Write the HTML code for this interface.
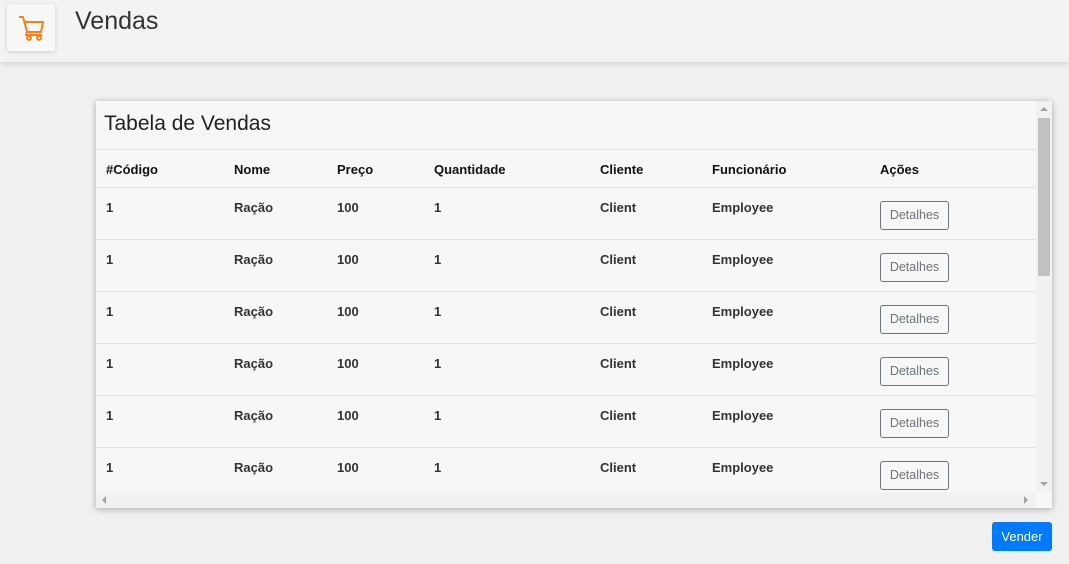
<!DOCTYPE html>
<html><head><meta charset="utf-8"><style>
*{box-sizing:border-box;margin:0;padding:0}
body{width:1069px;height:564px;background:#f0f0f0;font-family:"Liberation Sans",Arial,sans-serif;position:relative;overflow:hidden;color:#212529}
.hdr{position:absolute;left:0;top:0;width:1069px;height:62px;background:#f3f3f3;box-shadow:0 2px 5px rgba(0,0,0,.12)}
.ic{position:absolute;left:7px;top:4px;width:48px;height:47px;background:#f8f8f8;box-shadow:0 1px 4px rgba(0,0,0,.15)}
.ttl{position:absolute;left:75px;top:7px;font-size:25px;color:#333}
.card{position:absolute;left:96px;top:101px;width:956px;height:407px;background:#f7f7f7;box-shadow:0 1px 6px rgba(0,0,0,.3);overflow:hidden}
.ct{position:absolute;left:8px;top:11px;font-size:21px;color:#222}
.ln{position:absolute;left:0;width:940px;height:1px;background:#dee2e6}
.t{position:absolute;font-size:13px;font-weight:bold;color:#333}
.th{color:#111}
.btn{position:absolute;left:784px;width:69px;height:29px;border:1px solid #6c757d;border-radius:3px;font-size:12.5px;color:#6c757d;text-align:center;line-height:27px}
.vs{position:absolute;left:940px;top:0;width:16px;height:391px;background:#f1f1f1}
.vt{position:absolute;left:942px;top:17px;width:12px;height:158px;background:#c1c1c1}
.hs{position:absolute;left:0;top:391px;width:940px;height:16px;background:#f1f1f1}
.vb{position:absolute;left:992px;top:522px;width:60px;height:29px;background:#007bff;border-radius:3px;color:#fff;font-size:13px;text-align:center;line-height:29px}
</style></head><body>
<div class="hdr">
<div class="ic"><svg width="48" height="47" viewBox="0 0 48 47"><g fill="none" stroke="#fd7e14" stroke-width="2" stroke-linejoin="round"><path d="M12 13h4l4 15h14l2-10H17"/><path d="M20 28l-1 3h16"/></g><circle cx="22" cy="34" r="2" fill="none" stroke="#fd7e14" stroke-width="1.8"/><circle cx="32" cy="34" r="2" fill="none" stroke="#fd7e14" stroke-width="1.8"/></svg></div>
<div class="ttl">Vendas</div>
</div>
<div class="card">
<div class="ct">Tabela de Vendas</div>
<div class="ln" style="top:48px"></div>
<div class="t th" style="left:10px;top:61px">#Código</div>
<div class="t th" style="left:138px;top:61px">Nome</div>
<div class="t th" style="left:241px;top:61px">Preço</div>
<div class="t th" style="left:338px;top:61px">Quantidade</div>
<div class="t th" style="left:504px;top:61px">Cliente</div>
<div class="t th" style="left:616px;top:61px">Funcionário</div>
<div class="t th" style="left:784px;top:61px">Ações</div>
<div class="ln" style="top:86px"></div>
<div class="ln" style="top:138px"></div>
<div class="ln" style="top:190px"></div>
<div class="ln" style="top:242px"></div>
<div class="ln" style="top:294px"></div>
<div class="ln" style="top:346px"></div>
<div class="t" style="left:10px;top:99px">1</div><div class="t" style="left:138px;top:99px">Ração</div><div class="t" style="left:241px;top:99px">100</div><div class="t" style="left:338px;top:99px">1</div><div class="t" style="left:504px;top:99px">Client</div><div class="t" style="left:616px;top:99px">Employee</div><div class="btn" style="top:100px">Detalhes</div>
<div class="t" style="left:10px;top:151px">1</div><div class="t" style="left:138px;top:151px">Ração</div><div class="t" style="left:241px;top:151px">100</div><div class="t" style="left:338px;top:151px">1</div><div class="t" style="left:504px;top:151px">Client</div><div class="t" style="left:616px;top:151px">Employee</div><div class="btn" style="top:152px">Detalhes</div>
<div class="t" style="left:10px;top:203px">1</div><div class="t" style="left:138px;top:203px">Ração</div><div class="t" style="left:241px;top:203px">100</div><div class="t" style="left:338px;top:203px">1</div><div class="t" style="left:504px;top:203px">Client</div><div class="t" style="left:616px;top:203px">Employee</div><div class="btn" style="top:204px">Detalhes</div>
<div class="t" style="left:10px;top:255px">1</div><div class="t" style="left:138px;top:255px">Ração</div><div class="t" style="left:241px;top:255px">100</div><div class="t" style="left:338px;top:255px">1</div><div class="t" style="left:504px;top:255px">Client</div><div class="t" style="left:616px;top:255px">Employee</div><div class="btn" style="top:256px">Detalhes</div>
<div class="t" style="left:10px;top:307px">1</div><div class="t" style="left:138px;top:307px">Ração</div><div class="t" style="left:241px;top:307px">100</div><div class="t" style="left:338px;top:307px">1</div><div class="t" style="left:504px;top:307px">Client</div><div class="t" style="left:616px;top:307px">Employee</div><div class="btn" style="top:308px">Detalhes</div>
<div class="t" style="left:10px;top:359px">1</div><div class="t" style="left:138px;top:359px">Ração</div><div class="t" style="left:241px;top:359px">100</div><div class="t" style="left:338px;top:359px">1</div><div class="t" style="left:504px;top:359px">Client</div><div class="t" style="left:616px;top:359px">Employee</div><div class="btn" style="top:360px">Detalhes</div>
<div class="hs"><svg width="940" height="16"><path d="M6 8l4-4v8z" fill="#a3a3a3"/><path d="M928 4l4 4-4 4z" fill="#a3a3a3"/></svg></div>
<div class="vs"><svg width="16" height="391"><path d="M4 10l4-4 4 4z" fill="#a3a3a3"/><path d="M4 381l4 4 4-4z" fill="#a3a3a3"/></svg></div>
<div class="vt"></div>
</div>
<div class="vb">Vender</div>
</body></html>
